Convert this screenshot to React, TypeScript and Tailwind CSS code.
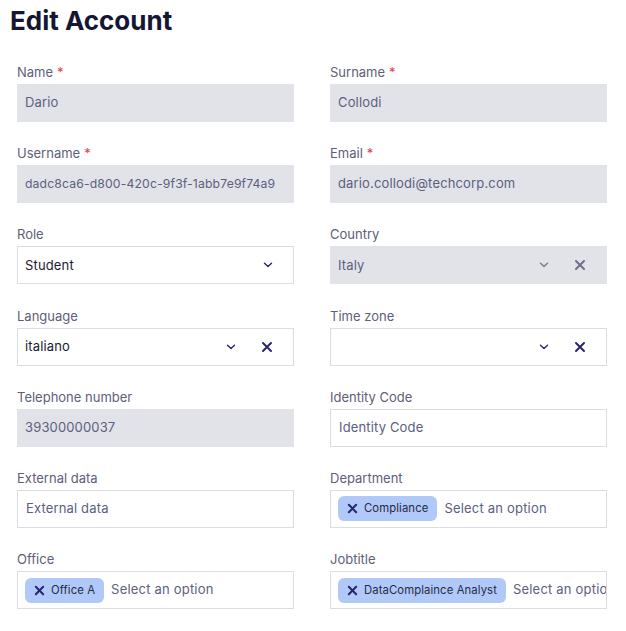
import React from 'react';

const font = { fontFamily: 'Inter, "Noto Sans", sans-serif' };

function Chevron() {
  return (
    <svg width="10" height="6" viewBox="0 0 10 6" className="shrink-0">
      <path d="M1.5 1.2 L5 4.6 L8.5 1.2" fill="none" stroke="currentColor" strokeWidth="1.4" strokeLinecap="round" strokeLinejoin="round" />
    </svg>
  );
}

function Cross({ size = 11, weight = 2 }: { size?: number; weight?: number }) {
  return (
    <svg width={size} height={size} viewBox="0 0 12 12" className="shrink-0">
      <path d="M2 2 L10 10 M10 2 L2 10" fill="none" stroke="currentColor" strokeWidth={weight} strokeLinecap="round" />
    </svg>
  );
}

function Label({ text, required }: { text: string; required?: boolean }) {
  return (
    <div className="mb-[2px] h-[20px] text-[13px] leading-[20px] text-[#5d6079]">
      {text}
      {required && <span className="ml-[4px] text-[#e23a4e]">*</span>}
    </div>
  );
}

function Field({ label, required, children }: { label: string; required?: boolean; children: React.ReactNode }) {
  return (
    <div>
      <Label text={label} required={required} />
      {children}
    </div>
  );
}

function Disabled({ value, small }: { value: string; small?: boolean }) {
  return (
    <div
      className={
        small
          ? 'flex h-[38px] items-center overflow-hidden whitespace-nowrap bg-[#e2e3e8] px-[8px] text-[12.2px] tracking-[0.15px] text-[#5b6080]'
          : 'flex h-[38px] items-center overflow-hidden whitespace-nowrap bg-[#e2e3e8] px-[8px] text-[13px] tracking-[0.15px] text-[#5b6080]'
      }
    >
      {value}
    </div>
  );
}

function TextBox({ placeholder }: { placeholder: string }) {
  return (
    <div className="flex h-[38px] items-center border border-[#dcdde3] bg-white px-[8px] text-[13px] tracking-[0.15px] text-[#5b6080]">
      {placeholder}
    </div>
  );
}

function Select({
  value,
  clearable,
  disabled,
}: {
  value: string;
  clearable?: boolean;
  disabled?: boolean;
}) {
  return (
    <div
      className={
        disabled
          ? 'flex h-[38px] items-center bg-[#e2e3e8] pl-[8px] pr-[21px] text-[13px] tracking-[0.15px] text-[#5b6080]'
          : 'flex h-[38px] items-center border border-[#dcdde3] bg-white pl-[7px] pr-[20px] text-[13px] tracking-[0.15px] text-[#1a1b2e]'
      }
    >
      <span className="flex-1">{value}</span>
      <span className={disabled ? 'text-[#7a7d95]' : 'text-[#2a2470]'}>
        <Chevron />
      </span>
      {clearable && (
        <span className={disabled ? 'ml-[25px] text-[#6c6f88]' : 'ml-[25px] text-[#2a2470]'}>
          <Cross size={12} />
        </span>
      )}
    </div>
  );
}

function Multi({ chip }: { chip: string }) {
  return (
    <div className="flex h-[38px] items-center overflow-hidden whitespace-nowrap border border-[#dcdde3] bg-white pl-[7px] text-[13px] tracking-[0.2px] text-[#5b6080]">
      <span className="flex h-[25px] shrink-0 items-center gap-[6px] rounded-[6px] bg-[#b1c9f8] pl-[9px] pr-[9px] text-[11.3px] tracking-[0.1px] text-[#262a45]">
        <span className="text-[#2a2470]">
          <Cross size={11} weight={2.2} />
        </span>
        {chip}
      </span>
      <span className="ml-[7px]">Select an option</span>
    </div>
  );
}

export default function App() {
  return (
    <div className="min-h-[631px] bg-white px-[10px] pt-[3px]" style={font}>
      <h1 className="text-[26px] font-bold leading-[36px] text-[#141633]">Edit Account</h1>
      <div className="ml-[7px] mt-[23px] grid w-[590px] grid-cols-2 gap-x-[36px] gap-y-[21.2px]">
        <Field label="Name" required>
          <Disabled value="Dario" />
        </Field>
        <Field label="Surname" required>
          <Disabled value="Collodi" />
        </Field>
        <Field label="Username" required>
          <Disabled value="dadc8ca6-d800-420c-9f3f-1abb7e9f74a9" small />
        </Field>
        <Field label="Email" required>
          <Disabled value="dario.collodi@techcorp.com" />
        </Field>
        <Field label="Role">
          <Select value="Student" />
        </Field>
        <Field label="Country">
          <Select value="Italy" clearable disabled />
        </Field>
        <Field label="Language">
          <Select value="italiano" clearable />
        </Field>
        <Field label="Time zone">
          <Select value="" clearable />
        </Field>
        <Field label="Telephone number">
          <Disabled value="39300000037" />
        </Field>
        <Field label="Identity Code">
          <TextBox placeholder="Identity Code" />
        </Field>
        <Field label="External data">
          <TextBox placeholder="External data" />
        </Field>
        <Field label="Department">
          <Multi chip="Compliance" />
        </Field>
        <Field label="Office">
          <Multi chip="Office A" />
        </Field>
        <Field label="Jobtitle">
          <Multi chip="DataComplaince Analyst" />
        </Field>
      </div>
    </div>
  );
}
